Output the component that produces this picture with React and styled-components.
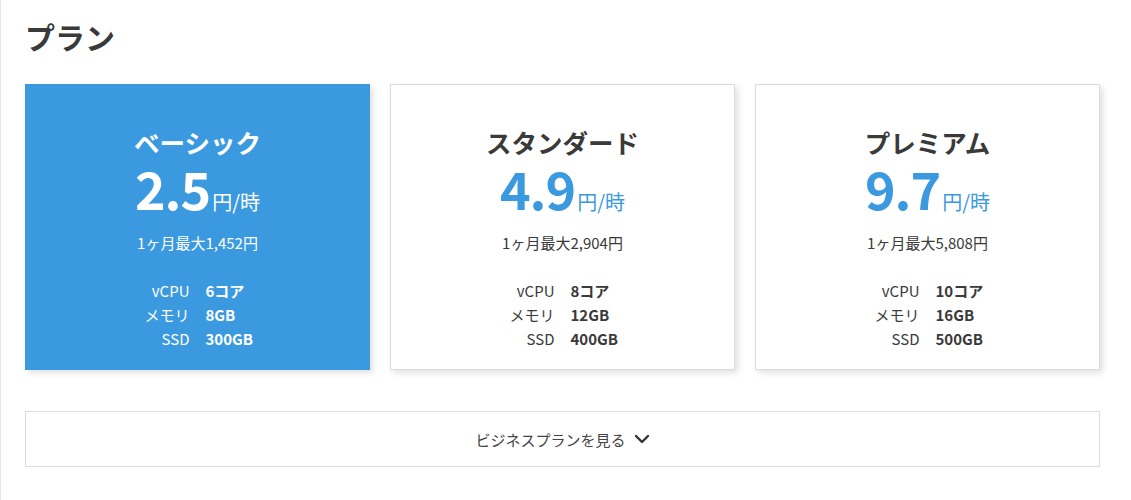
import React from 'react';
import styled, { createGlobalStyle } from 'styled-components';

const plans = [
  { id: 'basic', name: 'ベーシック', price: '2.5', monthly: '1,452', cpu: '6コア', memory: '8GB', ssd: '300GB', active: true },
  { id: 'standard', name: 'スタンダード', price: '4.9', monthly: '2,904', cpu: '8コア', memory: '12GB', ssd: '400GB' },
  { id: 'premium', name: 'プレミアム', price: '9.7', monthly: '5,808', cpu: '10コア', memory: '16GB', ssd: '500GB' },
];

const ChevronDown = () => (
  <svg width="16" height="10" viewBox="0 0 16 10" fill="none">
    <polyline points="2,2 8,8 14,2" stroke="currentColor" strokeWidth="2.4" strokeLinecap="round" strokeLinejoin="round" />
  </svg>
);

export default function App() {
  return (
    <>
      <GlobalStyle />
      <PageWrapper>
        <Heading>プラン</Heading>
        <CardRow>
          {plans.map((plan) => (
            <PlanCard key={plan.id} $active={plan.active}>
              <PlanName>{plan.name}</PlanName>
              <Price $active={plan.active}>
                <PriceNumber>{plan.price}</PriceNumber>
                <PriceUnit>円/時</PriceUnit>
              </Price>
              <Monthly>1ヶ月最大{plan.monthly}円</Monthly>
              <SpecList>
                <dt>vCPU</dt>
                <dd>{plan.cpu}</dd>
                <dt>メモリ</dt>
                <dd>{plan.memory}</dd>
                <dt>SSD</dt>
                <dd>{plan.ssd}</dd>
              </SpecList>
            </PlanCard>
          ))}
        </CardRow>
        <MoreButton type="button">
          ビジネスプランを見る
          <ChevronDown />
        </MoreButton>
      </PageWrapper>
    </>
  );
}

const GlobalStyle = createGlobalStyle`
  * {
    box-sizing: border-box;
  }

  body {
    margin: 0;
    background: #fff;
    color: #3a3a3a;
    font-family: 'Noto Sans CJK JP', 'Noto Sans', sans-serif;
  }
`;

const PageWrapper = styled.div`
  min-height: 100vh;
  border-left: 1px solid #e6e6e6;
  padding: 14px 30px 30px 24px;
`;

const Heading = styled.h2`
  margin: 0 0 26px;
  font-size: 30px;
  line-height: 44px;
  font-weight: 700;
  color: #3a3a3a;
`;

const CardRow = styled.div`
  display: grid;
  grid-template-columns: repeat(3, 345px);
  gap: 20px;
`;

const PlanCard = styled.div`
  height: 286px;
  padding-top: 40px;
  display: flex;
  flex-direction: column;
  align-items: center;
  background: ${(p) => (p.$active ? '#3b99e0' : '#fff')};
  color: ${(p) => (p.$active ? '#fff' : '#3a3a3a')};
  border: 1px solid ${(p) => (p.$active ? '#3b99e0' : '#dcdcdc')};
  box-shadow: 3px 3px 6px rgba(0, 0, 0, 0.12);
`;

const PlanName = styled.div`
  font-size: 25.5px;
  line-height: 34px;
  font-weight: 700;
`;

const Price = styled.div`
  display: flex;
  align-items: baseline;
  color: ${(p) => (p.$active ? '#fff' : '#3b99e0')};
`;

const PriceNumber = styled.span`
  font-size: 52px;
  line-height: 58px;
  font-weight: 700;
  letter-spacing: -1px;
`;

const PriceUnit = styled.span`
  font-size: 20px;
  margin-left: 2px;
`;

const Monthly = styled.div`
  margin-top: 14px;
  font-size: 15px;
  line-height: 24px;
`;

const SpecList = styled.dl`
  width: 100%;
  margin: 24px 0 0;
  display: grid;
  grid-template-columns: 1fr 1fr;
  column-gap: 16px;
  font-size: 15px;
  line-height: 24px;

  dt {
    text-align: right;
  }

  dd {
    margin: 0;
    font-weight: 700;
  }
`;

const MoreButton = styled.button`
  width: 1075px;
  height: 56px;
  margin-top: 41px;
  display: flex;
  align-items: center;
  justify-content: center;
  gap: 8px;
  background: #fff;
  border: 1px solid #dcdcdc;
  font-family: inherit;
  font-size: 15px;
  color: #444;
  cursor: pointer;

  svg {
    color: #333;
  }
`;
